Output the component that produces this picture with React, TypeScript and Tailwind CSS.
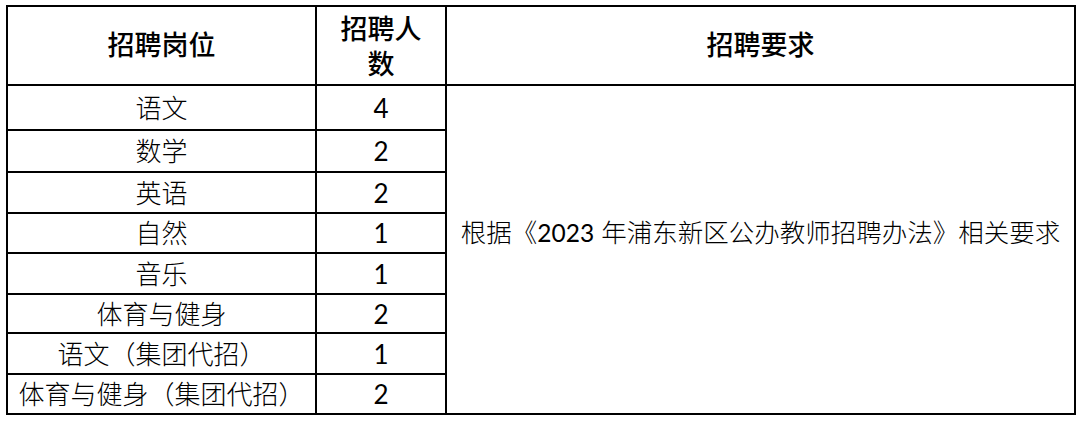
const cjk = "font-['Lato','Noto_Sans_CJK_SC',sans-serif]";

const rows = [
  { name: "语文", count: 4, h: "h-[45px]" },
  { name: "数学", count: 2, h: "h-[42px]" },
  { name: "英语", count: 2, h: "h-[41px]" },
  { name: "自然", count: 1, h: "h-[40px]" },
  { name: "音乐", count: 1, h: "h-[41px]" },
  { name: "体育与健身", count: 2, h: "h-[39px]" },
  { name: "语文（集团代招）", count: 1, h: "h-[41px]" },
  { name: "体育与健身（集团代招）", count: 2, h: "h-[40px]" },
];

export default function App() {
  return (
    <div className={`min-h-[421px] w-[1080px] bg-white pl-[6px] pt-[5px] text-black ${cjk}`}>
      <table className="w-[1068px] table-fixed border-collapse">
        <colgroup>
          <col className="w-[309px]" />
          <col className="w-[130px]" />
          <col className="w-[629px]" />
        </colgroup>
        <thead>
          <tr className="h-[79px]">
            <th className="border-2 border-black text-[27px] font-medium">招聘岗位</th>
            <th className="border-2 border-black text-[27px] leading-[35px] font-medium">
              招聘人
              <br />
              数
            </th>
            <th className="border-2 border-black text-[27px] font-medium">招聘要求</th>
          </tr>
        </thead>
        <tbody>
          {rows.map((row, i) => (
            <tr key={row.name} className={row.h}>
              <td className="border-2 border-black p-0 text-center text-[26px] leading-none font-light">
                {row.name}
              </td>
              <td className="border-2 border-black p-0 text-center text-[26px] leading-none">
                {row.count}
              </td>
              {i === 0 ? (
                <td
                  rowSpan={rows.length}
                  className="border-2 border-black pb-[34px] text-center text-[25.5px] leading-none font-light"
                >
                  根据《<span className="text-[24.5px] font-normal">2023</span> 年浦东新区公办教师招聘办法》相关要求
                </td>
              ) : null}
            </tr>
          ))}
        </tbody>
      </table>
    </div>
  );
}
